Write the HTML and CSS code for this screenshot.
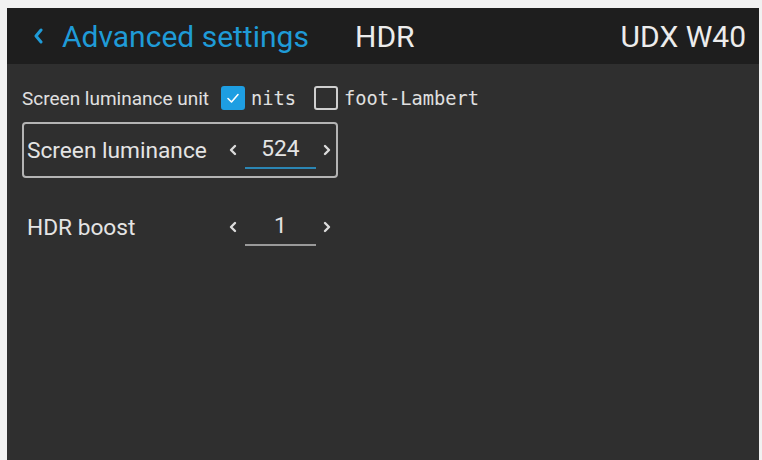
FILE: index.html
```html
<!DOCTYPE html>
<html lang="en">
<head>
    <meta charset="UTF-8">
    <title>HDR - Advanced settings</title>
    <link rel="stylesheet" href="styles.css">
</head>
<body>
    <div class="screen">
        <div class="top-bar">
            <div class="back">
                <svg class="back-icon" width="10" height="16" viewBox="0 0 10 16"><path d="M8 2 L3 8 L8 14" fill="none" stroke="currentColor" stroke-width="3" stroke-linecap="round" stroke-linejoin="round"/></svg>
                <span class="back-title">Advanced settings</span>
            </div>
            <span class="page-title">HDR</span>
            <span class="device">UDX W40</span>
        </div>

        <div class="content">
            <div class="unit-row">
                <span class="unit-label">Screen luminance unit</span>
                <span class="check checked">
                    <svg width="14" height="12" viewBox="0 0 14 12"><path d="M2 6.5 L5.5 10 L12 2.5" fill="none" stroke="#fff" stroke-width="1.6" stroke-linecap="round" stroke-linejoin="round"/></svg>
                </span>
                <span class="check-text">nits</span>
                <span class="check"></span>
                <span class="check-text">foot-Lambert</span>
            </div>

            <div class="setting focused">
                <span class="setting-label">Screen luminance</span>
                <svg class="arrow" width="8" height="14" viewBox="0 0 8 14"><path d="M6 3 L2 7 L6 11" fill="none" stroke="currentColor" stroke-width="2.4" stroke-linecap="round" stroke-linejoin="round"/></svg>
                <span class="value active">524</span>
                <svg class="arrow" width="8" height="14" viewBox="0 0 8 14"><path d="M2 3 L6 7 L2 11" fill="none" stroke="currentColor" stroke-width="2.4" stroke-linecap="round" stroke-linejoin="round"/></svg>
            </div>

            <div class="setting">
                <span class="setting-label">HDR boost</span>
                <svg class="arrow" width="8" height="14" viewBox="0 0 8 14"><path d="M6 3 L2 7 L6 11" fill="none" stroke="currentColor" stroke-width="2.4" stroke-linecap="round" stroke-linejoin="round"/></svg>
                <span class="value">1</span>
                <svg class="arrow" width="8" height="14" viewBox="0 0 8 14"><path d="M2 3 L6 7 L2 11" fill="none" stroke="currentColor" stroke-width="2.4" stroke-linecap="round" stroke-linejoin="round"/></svg>
            </div>
        </div>
    </div>
</body>
</html>
```

FILE: styles.css
```css
body { margin: 0; background-color: #f1f1f1; font-family: Roboto, "Liberation Sans", sans-serif; overflow: hidden; }
.screen { margin: 8px 0 0 7px; width: 752px; height: 452px; background-color: #2f2f2f; color: #e4e4e4; }

.top-bar { display: flex; align-items: center; height: 56px; padding: 0 13px 0 26px; background-color: #1e1e1e; }
.back { display: flex; align-items: center; gap: 19px; color: #1f9bd7; width: 322px; }
.back-icon { flex: none; }
.back-title { font-size: 30px; }
.page-title { font-size: 30px; color: #ececec; }
.device { margin-left: auto; font-size: 30px; color: #ececec; }

.content { padding: 22px 0 0 15px; }
.unit-row { display: flex; align-items: center; height: 24px; margin-bottom: 12px; }
.unit-label { font-size: 19px; margin-right: 12px; color: #e0e0e0; }
.check { box-sizing: border-box; width: 24px; height: 24px; border: 2px solid #cfcfcf; border-radius: 3px; display: flex; align-items: center; justify-content: center; }
.check.checked { background-color: #1e9ee2; border-color: #1e9ee2; }
.check-text { font-family: "DejaVu Sans Mono", monospace; font-size: 18.7px; margin: 0 18px 0 6px; color: #e0e0e0; }

.setting { box-sizing: border-box; display: flex; align-items: center; width: 316px; height: 56px; padding-left: 3px; border: 2px solid transparent; border-radius: 4px; margin-bottom: 21px; }
.setting.focused { border-color: #b4b4b4; }
.setting-label { width: 202px; font-size: 22.7px; }
.arrow { flex: none; color: #dcdcdc; }
.value { box-sizing: border-box; width: 71px; height: 38px; line-height: 36px; margin: 0 7px 0 8px; text-align: center; font-size: 22.7px; border-bottom: 2px solid #9a9a9a; }
.value.active { border-bottom-color: #2b86b4; }
```
